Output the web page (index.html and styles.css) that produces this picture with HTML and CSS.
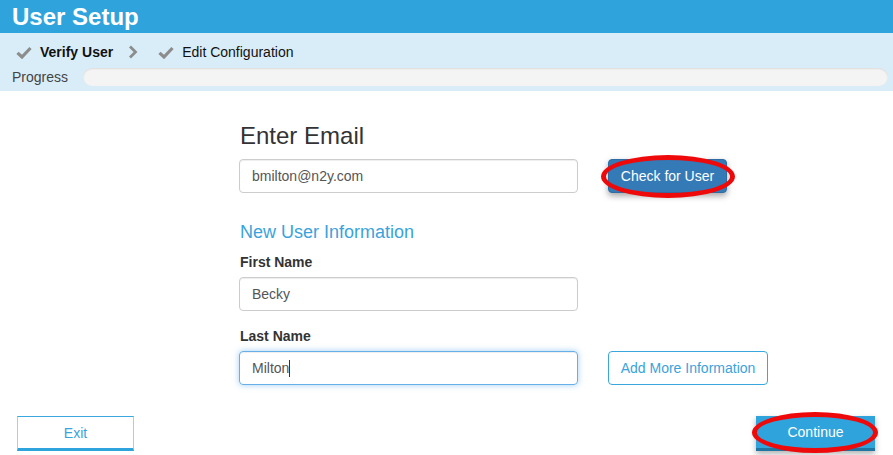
FILE: index.html
```html
<!DOCTYPE html>
<html lang="en">
<head>
<meta charset="utf-8">
<title>User Setup</title>
<link rel="stylesheet" href="styles.css">
</head>
<body>
<header class="topbar">
  <h1 class="title">User Setup</h1>
</header>
<section class="subbar">
  <nav class="steps">
    <span class="step step-active">
      <svg class="check" viewBox="0 0 16 13" width="16" height="13"><path d="M1.5 6.8 L6 11 L14.5 2" fill="none" stroke="#8c8c8c" stroke-width="3.2" stroke-linejoin="miter"/></svg>
      Verify User
    </span>
    <svg class="chev" viewBox="0 0 10 14" width="10" height="14"><path d="M2 1.5 L7.5 7 L2 12.5" fill="none" stroke="#8c8c8c" stroke-width="2.8"/></svg>
    <span class="step">
      <svg class="check" viewBox="0 0 16 13" width="16" height="13"><path d="M1.5 6.8 L6 11 L14.5 2" fill="none" stroke="#8c8c8c" stroke-width="3.2" stroke-linejoin="miter"/></svg>
      Edit Configuration
    </span>
  </nav>
  <div class="progress-row">
    <span class="progress-label">Progress</span>
    <div class="progress-track"></div>
  </div>
</section>
<main class="content">
  <h2 class="heading">Enter Email</h2>
  <div class="row">
    <div class="field">bmilton@n2y.com</div>
    <span class="annot">
      <button class="btn btn-primary">Check for User</button>
    </span>
  </div>
  <h3 class="subheading">New User Information</h3>
  <label class="label">First Name</label>
  <div class="row">
    <div class="field">Becky</div>
  </div>
  <label class="label label-2">Last Name</label>
  <div class="row">
    <div class="field field-focus">Milton<span class="caret"></span></div>
    <button class="btn btn-outline">Add More Information</button>
  </div>
</main>
<footer class="footer">
  <button class="btn-exit">Exit</button>
  <span class="annot annot-continue">
    <button class="btn-continue">Continue</button>
  </span>
</footer>
</body>
</html>
```
FILE: styles.css
```css
* { box-sizing: border-box; }
html, body { margin: 0; padding: 0; }
body {
  width: 893px;
  height: 455px;
  overflow: hidden;
  background: #ffffff;
  font-family: "Liberation Sans", Arial, sans-serif;
  color: #333;
}
.topbar {
  height: 33px;
  background: #2fa4dc;
  padding-left: 12px;
}
.title {
  margin: 0;
  font-size: 24px;
  line-height: 33px;
  font-weight: bold;
  color: #fff;
}
.subbar {
  background: #d9edf8;
  height: 58px;
  padding: 9px 5px 0 12px;
}
.steps {
  display: flex;
  align-items: center;
  height: 20px;
  font-size: 14px;
  color: #111;
  padding-left: 4px;
}
.step { display: flex; align-items: center; gap: 8px; }
.step-active { font-weight: bold; }
.check { display: block; margin-top: 1px; }
.chev { display: block; margin: 0 20px 0 15px; }
.progress-row {
  display: flex;
  align-items: center;
  margin-top: 5px;
  height: 20px;
}
.progress-label {
  font-size: 14px;
  color: #444;
  width: 71px;
}
.progress-track {
  flex: 1;
  height: 18px;
  border-radius: 9px;
  background: #f4f4f4;
  box-shadow: inset 0 1px 2px rgba(0,0,0,0.1);
}
.content {
  padding-left: 239px;
  padding-top: 32px;
}
.heading {
  margin: 0 0 10px 1px;
  font-size: 24px;
  line-height: 26px;
  font-weight: normal;
  color: #333;
}
.row {
  display: flex;
  align-items: center;
  gap: 30px;
  height: 34px;
}
.field {
  width: 339px;
  height: 34px;
  border: 1px solid #ccc;
  border-radius: 4px;
  padding: 0 12px;
  font-size: 14px;
  line-height: 32px;
  color: #555;
  box-shadow: inset 0 1px 1px rgba(0,0,0,0.075);
}
.field-focus {
  border-color: #66afe9;
  box-shadow: inset 0 1px 1px rgba(0,0,0,0.075), 0 0 6px rgba(102,175,233,0.6);
}
.caret {
  display: inline-block;
  width: 1px;
  height: 17px;
  background: #333;
  vertical-align: -4px;
}
.subheading {
  margin: 29px 0 10px 1px;
  font-size: 18px;
  line-height: 20px;
  font-weight: normal;
  color: #3aa3dc;
}
.label {
  display: block;
  font-size: 14px;
  line-height: 20px;
  font-weight: bold;
  color: #333;
  margin: 0 0 5px 1px;
}
.label-2 { margin-top: 15px; }
.btn {
  font-family: inherit;
  font-size: 14px;
  height: 34px;
  border-radius: 4px;
  padding: 0 4px;
  white-space: nowrap;
  cursor: pointer;
}
.btn-primary {
  width: 119px;
  background: #337ab7;
  border: 1px solid #2e6da4;
  color: #fff;
  box-shadow: 0 3px 6px rgba(0,0,0,0.35);
}
.btn-outline {
  width: 160px;
  background: #fff;
  border: 1px solid #39a6dd;
  color: #3aa3dc;
}
.annot {
  position: relative;
  display: inline-block;
}
.annot::after {
  content: "";
  position: absolute;
  left: -7px;
  right: -8px;
  top: -4px;
  bottom: -5px;
  border: 5px solid #ee0a0a;
  border-radius: 50%;
  pointer-events: none;
}
.annot > button { display: block; }
.footer {
  display: flex;
  justify-content: space-between;
  align-items: flex-start;
  padding: 31px 18px 0 17px;
}
.btn-exit {
  width: 117px;
  height: 35px;
  background: #fff;
  border: 1px solid #3aa7df;
  border-left-color: #9fd2ee;
  border-right-color: #9fd2ee;
  border-bottom: 3px solid #2fa4dc;
  color: #3aa3dc;
  font-family: inherit;
  font-size: 14px;
}
.btn-continue {
  width: 119px;
  height: 35px;
  background: #2fa4dc;
  border: none;
  border-bottom: 3px solid #1f76a3;
  color: #fff;
  font-family: inherit;
  font-size: 14px;
  box-shadow: 0 3px 6px rgba(0,0,0,0.3);
}
.annot-continue::after {
  left: -4px;
  right: -3px;
  top: -4px;
  bottom: -2px;
}
```
